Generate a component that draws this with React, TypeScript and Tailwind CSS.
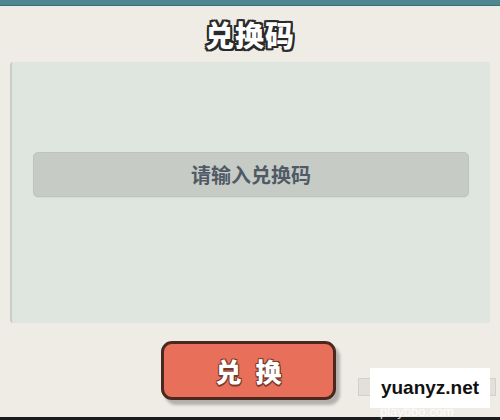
import React from 'react';

const outline =
  '-2px -2px 0 #2b2b2b, 2px -2px 0 #2b2b2b, -2px 2px 0 #2b2b2b, 2px 2px 0 #2b2b2b, 0 -2px 0 #2b2b2b, 0 2px 0 #2b2b2b, -2px 0 0 #2b2b2b, 2px 0 0 #2b2b2b';
const btnOutline =
  '-1px -1px 0 #7a3a2c, 1px -1px 0 #7a3a2c, -1px 1px 0 #7a3a2c, 1px 1px 0 #7a3a2c, 0 2px 0 #7a3a2c';

export default function App() {
  return (
    <div className="relative w-[500px] h-[420px] bg-[#efece6] flex flex-col overflow-hidden font-['Noto_Sans_CJK_SC','Noto_Sans',sans-serif]">
      {/* top strip */}
      <div className="h-[6px] bg-[#4d8891] border-b border-[#3b6f78]" />

      {/* title */}
      <div className="h-[56px] flex items-center justify-center">
        <span
          className="text-[29px] font-black text-white tracking-[1px] leading-none"
          style={{ textShadow: outline }}
        >
          兑换码
        </span>
      </div>

      {/* panel */}
      <div className="mx-[10px] h-[261px] bg-[#dfe5df] rounded-[3px] border-l-2 border-[#c9cec8] px-[21px] pt-[90px]">
        <div className="h-[45px] rounded-[5px] bg-[#c7cbc5] border border-[#bfc3bd] shadow-[0_1px_0_#d5dad4] flex items-center justify-center">
          <span className="text-[20px] font-bold text-[#505a66]">请输入兑换码</span>
        </div>
      </div>

      {/* button */}
      <div className="flex justify-center pt-[18px]">
        <button className="ml-[-3px] w-[175px] h-[59px] rounded-[11px] bg-[#e8705a] border-[3px] border-[#4a2820] shadow-[4px_5px_3px_rgba(0,0,0,0.25)] flex items-center justify-center gap-[14px]">
          <span className="text-[26px] font-black text-white leading-none" style={{ textShadow: btnOutline }}>兑</span>
          <span className="text-[26px] font-black text-white leading-none" style={{ textShadow: btnOutline }}>换</span>
        </button>
      </div>

      {/* bottom strip */}
      <div className="absolute left-0 right-0 bottom-0 h-[3px] bg-[#1c1c1c]" />

      {/* watermark */}
      <div className="absolute left-[358px] top-[378px] w-[138px] h-[18px] bg-[#e2e0db] border border-[#d2d0cb]" />
      <div className="absolute left-[370px] top-[368px] w-[120px] h-[40px] bg-white flex items-center justify-center">
        <span className="text-[19px] font-bold text-[#111] font-['Liberation_Sans',sans-serif]">yuanyz.net</span>
      </div>
      <div className="absolute left-[380px] top-[405px] text-[13px] leading-none text-white/80 font-['Liberation_Sans',sans-serif]">
        playbbo.com
      </div>
    </div>
  );
}
